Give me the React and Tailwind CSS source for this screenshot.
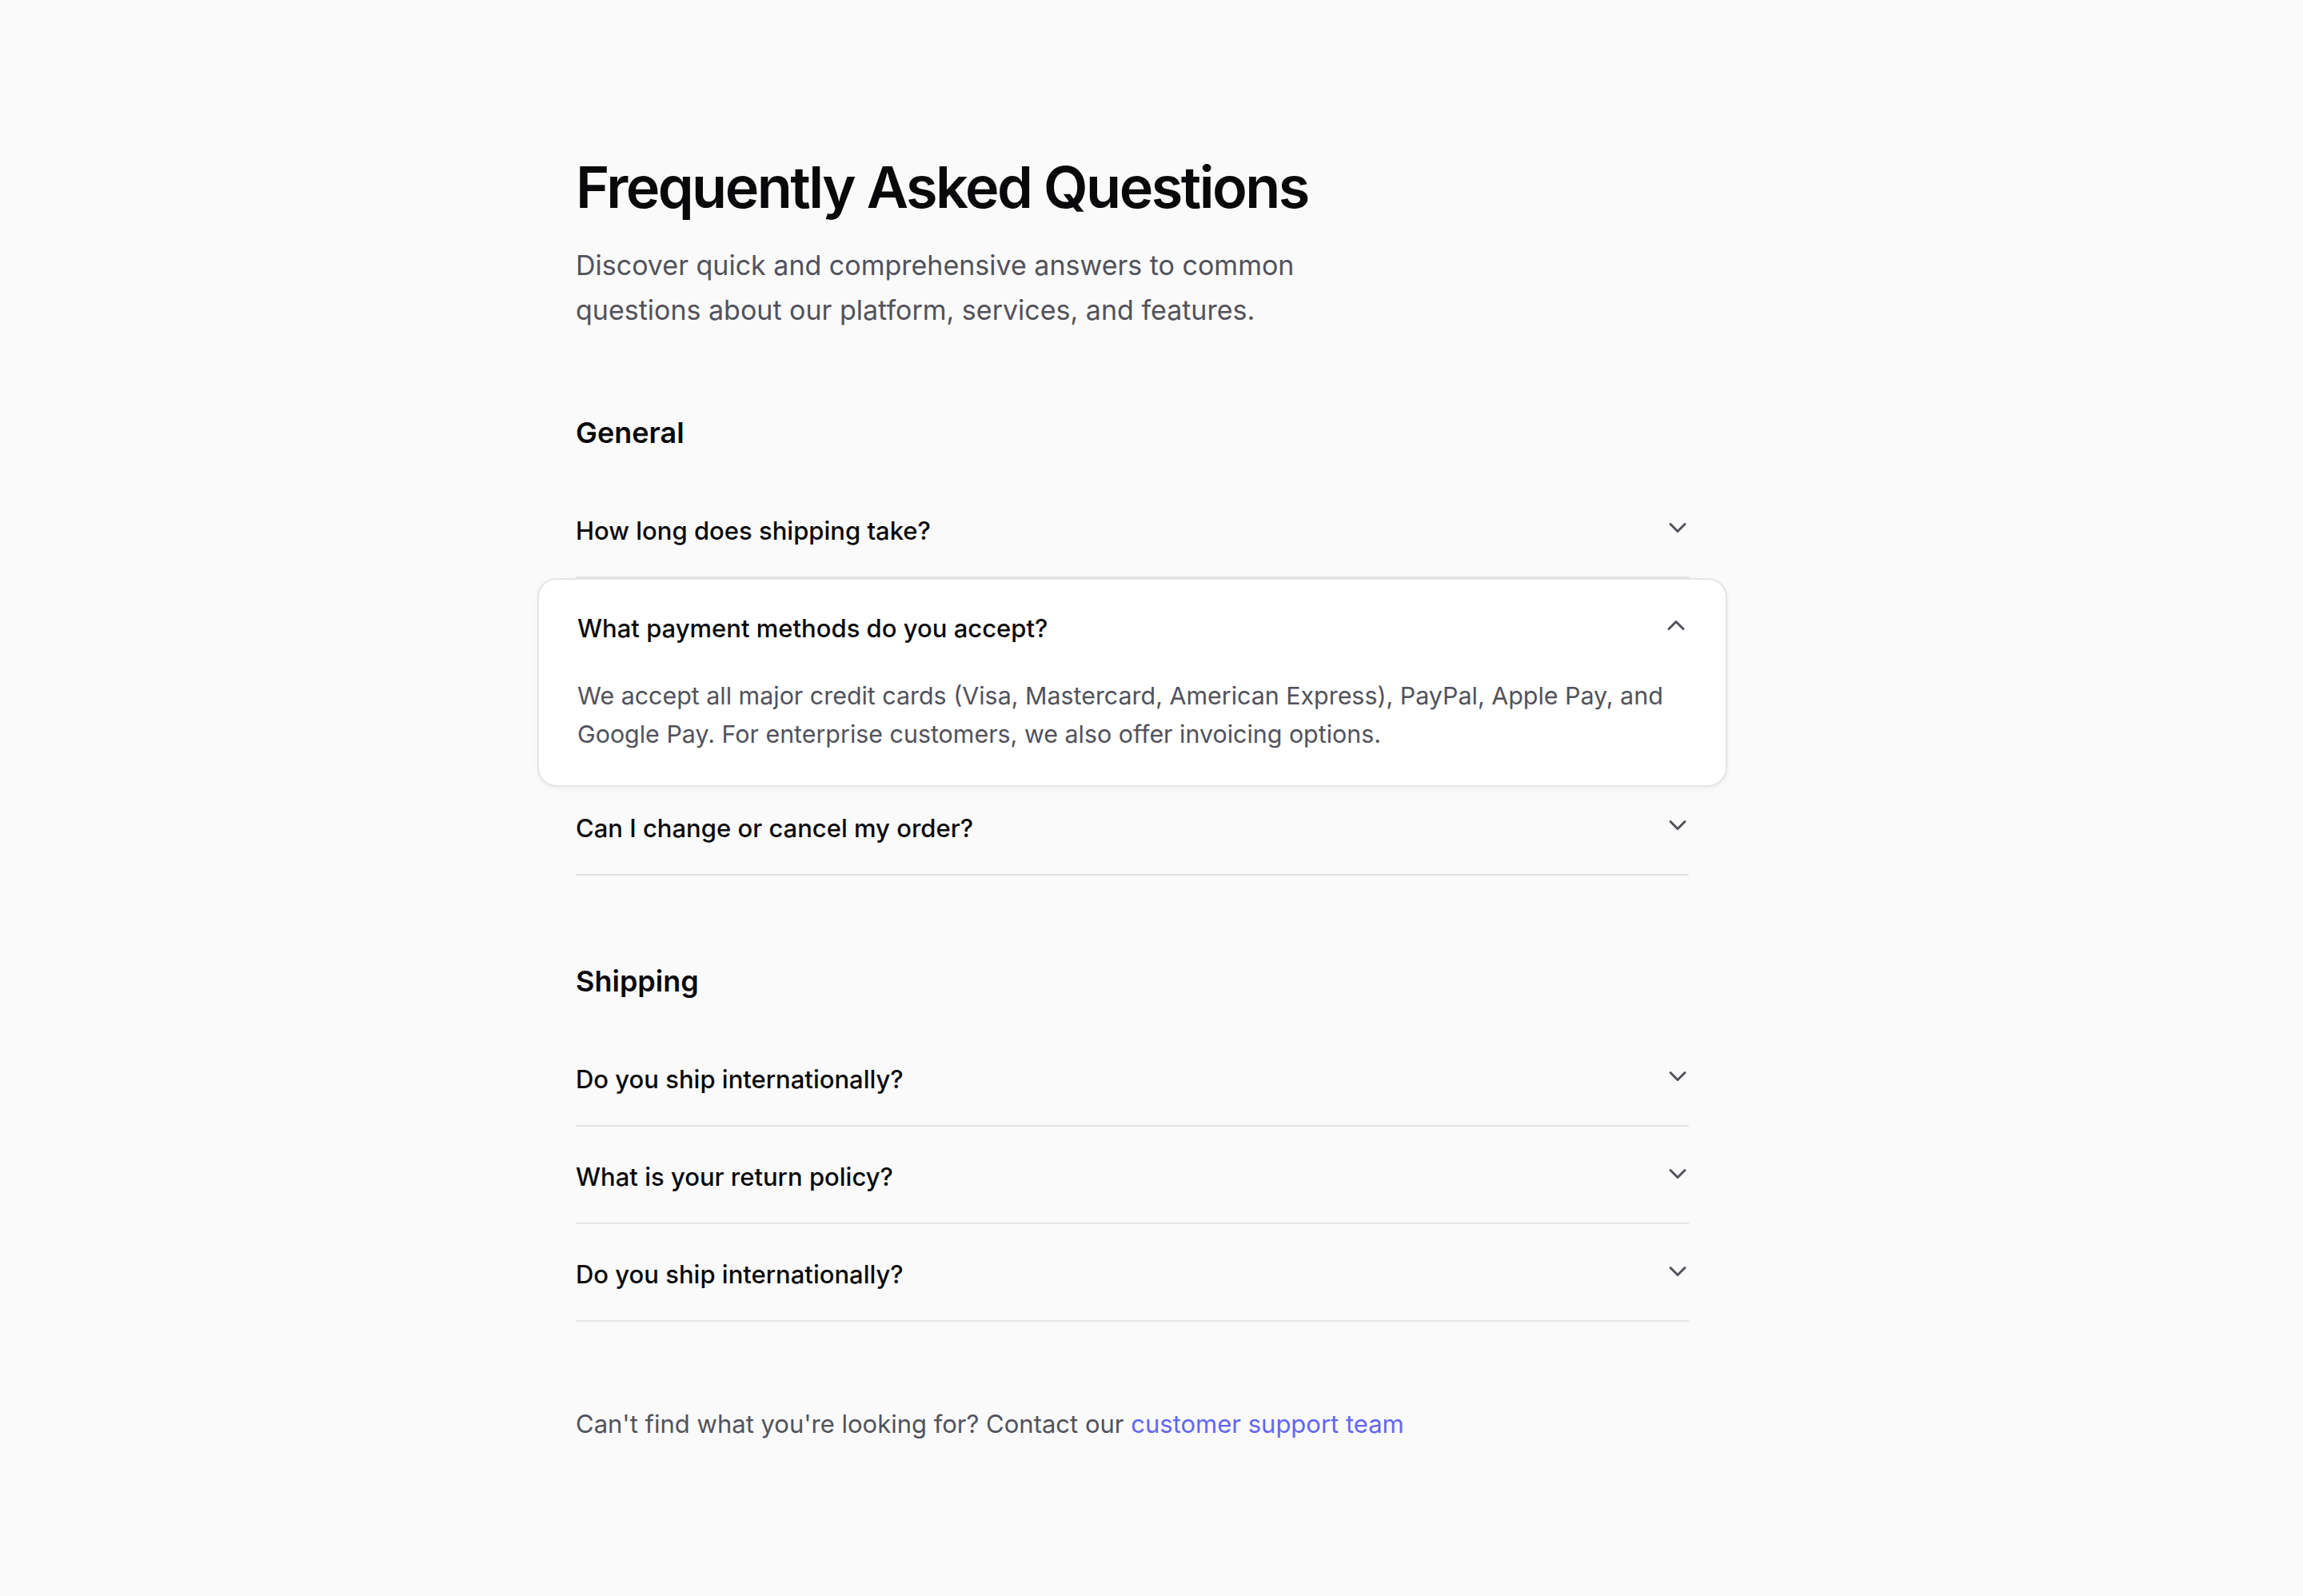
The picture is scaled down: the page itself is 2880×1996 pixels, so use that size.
import React from "react";
import { ChevronDown, ChevronUp } from "lucide-react";

const font = { fontFamily: "Inter, 'Noto Sans', sans-serif" };

function Row({ q }) {
  return (
    <div className="border-b-2 border-[#e4e4e7]">
      <div className="flex items-start justify-between pt-[43px] pb-[37px]">
        <span className="text-[31px] leading-[40px] font-medium text-[#09090b]">{q}</span>
        <ChevronDown size={36} strokeWidth={2} className="text-[#52525b] mt-[-2px] mr-[-4px]" />
      </div>
    </div>
  );
}

function OpenRow({ q, a }) {
  return (
    <div className="relative z-10 -mx-[48px] -mb-[11px] rounded-[24px] border-2 border-[#e4e4e7] bg-white px-[48px] shadow-[0_2px_6px_rgba(0,0,0,0.05)]">
      <div className="flex items-start justify-between pt-[41px] pb-[40px]">
        <span className="text-[31px] leading-[40px] font-medium text-[#09090b]">{q}</span>
        <ChevronUp size={36} strokeWidth={2} className="text-[#52525b] mt-[-2px] mr-[-4px]" />
      </div>
      <p className="pb-[40px] text-[30.4px] leading-[48px] text-[#52525b]">{a}</p>
    </div>
  );
}

export default function App() {
  return (
    <div className="min-h-screen bg-[#fafafa]" style={font}>
      <div className="ml-[720px] w-[1392px] pt-[194px] pb-[200px]">
        <h1 className="text-[72px] leading-[80px] font-semibold tracking-[-0.035em] text-[#09090b]">
          Frequently Asked Questions
        </h1>
        <p className="mt-[30px] max-w-[1000px] text-[34px] leading-[56px] text-[#52525b]">
          Discover quick and comprehensive answers to common questions about our platform, services, and features.
        </p>

        <section className="mt-[97px]">
          <h2 className="text-[36px] leading-[56px] font-semibold text-[#09090b]">General</h2>
          <div className="mt-[32px] flex flex-col">
            <Row q="How long does shipping take?" />
            <OpenRow
              q="What payment methods do you accept?"
              a="We accept all major credit cards (Visa, Mastercard, American Express), PayPal, Apple Pay, and Google Pay. For enterprise customers, we also offer invoicing options."
            />
            <Row q="Can I change or cancel my order?" />
          </div>
        </section>

        <section className="mt-[104px]">
          <h2 className="text-[36px] leading-[56px] font-semibold text-[#09090b]">Shipping</h2>
          <div className="mt-[32px] flex flex-col">
            <Row q="Do you ship internationally?" />
            <Row q="What is your return policy?" />
            <Row q="Do you ship internationally?" />
          </div>
        </section>

        <p className="mt-[104px] text-[31px] leading-[48px] text-[#52525b]">
          Can't find what you're looking for? Contact our{" "}
          <a href="#" className="text-[#6366f1]">customer support team</a>
        </p>
      </div>
    </div>
  );
}
